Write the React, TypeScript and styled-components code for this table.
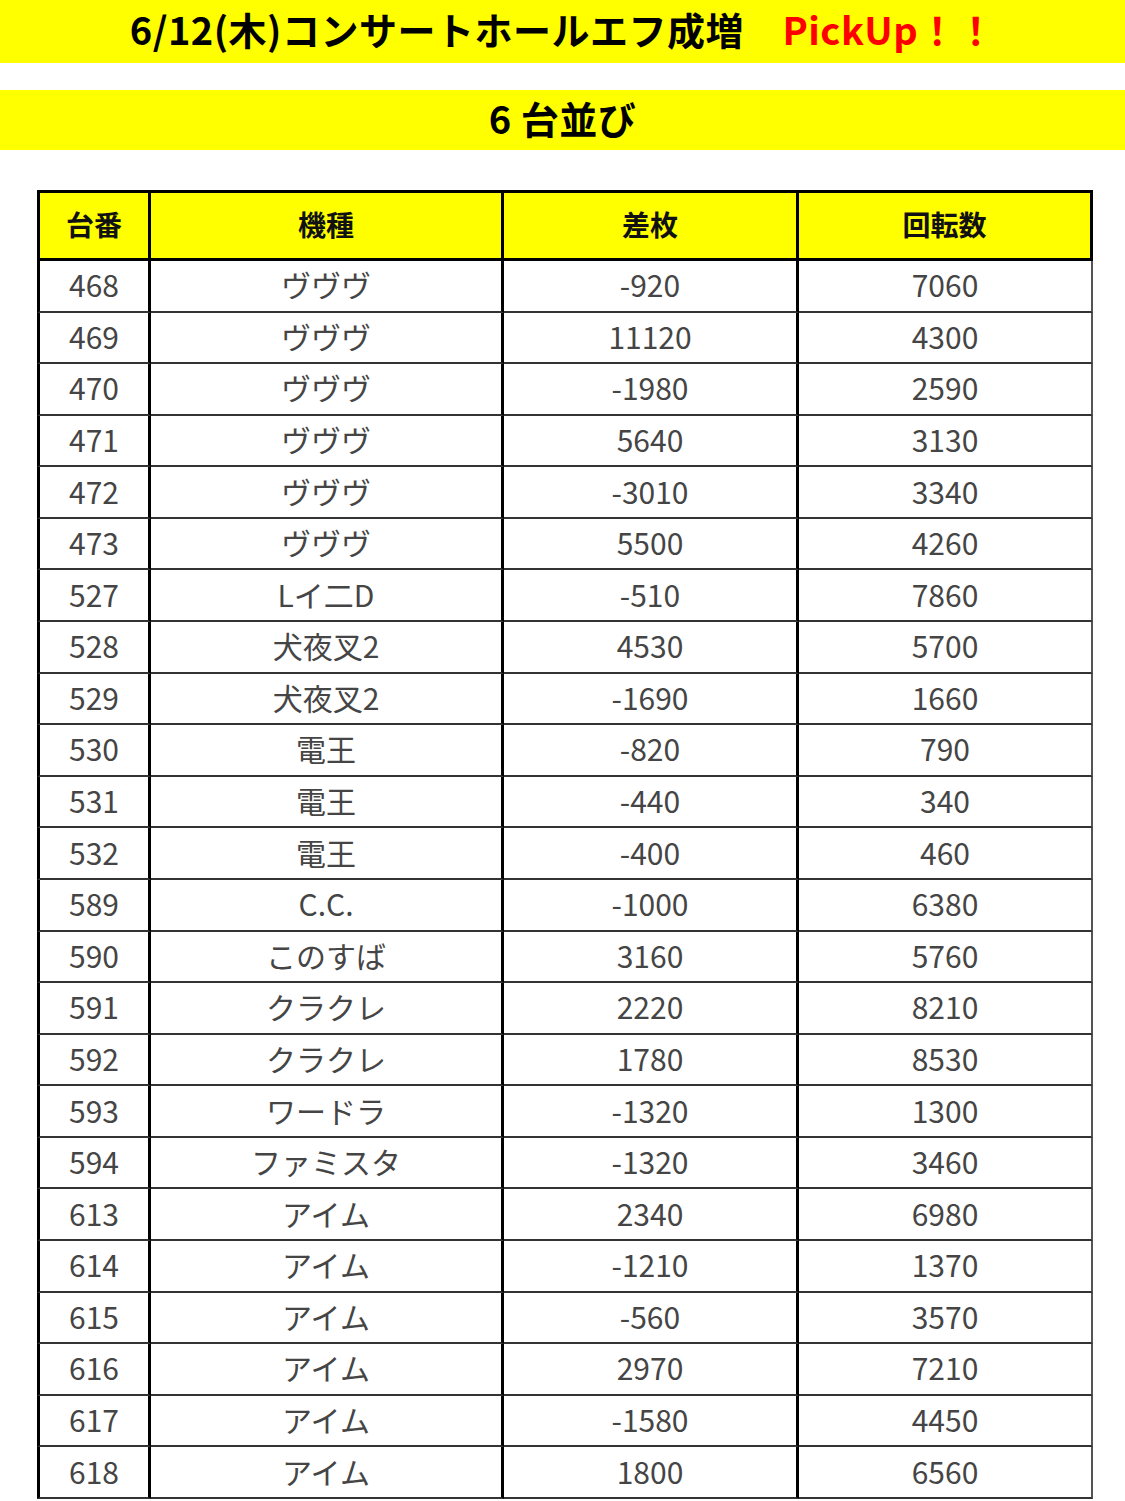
import React from "react";
import styled, { createGlobalStyle } from "styled-components";

const Global = createGlobalStyle`
  html, body { margin: 0; padding: 0; background: #ffffff; }
  body { font-family: "Noto Sans CJK JP", "Noto Sans", sans-serif; }
  * { box-sizing: border-box; }
`;

const Page = styled.div`
  width: 1125px;
  display: flex;
  flex-direction: column;
`;

const Banner = styled.div<{ $h: number; $mt?: number }>`
  height: ${(p) => p.$h}px;
  margin-top: ${(p) => p.$mt ?? 0}px;
  padding-bottom: 5px;
  background: #ffff00;
  display: flex;
  align-items: center;
  justify-content: center;
  font-family: "Noto Sans CJK JP", sans-serif;
  font-weight: 700;
  font-size: 38px;
  letter-spacing: 0.5px;
  color: #000;
  line-height: 1;
  white-space: pre;
`;

const Red = styled.span`
  color: #ff0000;
`;

const Grid = styled.div`
  margin: 40px 0 0 37px;
  width: 1056px;
  display: grid;
  grid-template-columns: 114px 353px 295px 294px;
`;

const HeadCell = styled.div<{ $first?: boolean }>`
  height: 71px;
  background: #ffff00;
  border-top: 3px solid #000;
  border-bottom: 3px solid #000;
  border-right: 3px solid #000;
  border-left: ${(p) => (p.$first ? "3px solid #000" : "0")};
  display: flex;
  align-items: center;
  justify-content: center;
  font-weight: 700;
  font-size: 28px;
  color: #111;
  padding-bottom: 4px;
`;

const Cell = styled.div<{ $first?: boolean; $last?: boolean }>`
  height: 51.58px;
  background: #fff;
  border-bottom: 2px solid #333;
  border-right: ${(p) => (p.$last ? "2px solid #555" : "3px solid #000")};
  border-left: ${(p) => (p.$first ? "3px solid #000" : "0")};
  display: flex;
  align-items: center;
  justify-content: center;
  font-size: 30px;
  color: #454545;
  padding-bottom: 3px;
  white-space: pre;
`;

const rows: [string, string, string, string][] = [
  ["468", "ヴヴヴ", "-920", "7060"],
  ["469", "ヴヴヴ", "11120", "4300"],
  ["470", "ヴヴヴ", "-1980", "2590"],
  ["471", "ヴヴヴ", "5640", "3130"],
  ["472", "ヴヴヴ", "-3010", "3340"],
  ["473", "ヴヴヴ", "5500", "4260"],
  ["527", "Lイ二D", "-510", "7860"],
  ["528", "犬夜叉2", "4530", "5700"],
  ["529", "犬夜叉2", "-1690", "1660"],
  ["530", "電王", "-820", "790"],
  ["531", "電王", "-440", "340"],
  ["532", "電王", "-400", "460"],
  ["589", "C.C.", "-1000", "6380"],
  ["590", "このすば", "3160", "5760"],
  ["591", "クラクレ", "2220", "8210"],
  ["592", "クラクレ", "1780", "8530"],
  ["593", "ワードラ", "-1320", "1300"],
  ["594", "ファミスタ", "-1320", "3460"],
  ["613", "アイム", "2340", "6980"],
  ["614", "アイム", "-1210", "1370"],
  ["615", "アイム", "-560", "3570"],
  ["616", "アイム", "2970", "7210"],
  ["617", "アイム", "-1580", "4450"],
  ["618", "アイム", "1800", "6560"],
];

const headers = ["台番", "機種", "差枚", "回転数"];

export default function App() {
  return (
    <Page>
      <Global />
      <Banner $h={63}>
        6/12(木)コンサートホールエフ成増　<Red>PickUp！！</Red>
      </Banner>
      <Banner $h={60} $mt={27}>
        6 台並び
      </Banner>
      <Grid>
        {headers.map((h, i) => (
          <HeadCell key={h} $first={i === 0}>
            {h}
          </HeadCell>
        ))}
        {rows.map((r) =>
          r.map((v, i) => (
            <Cell key={r[0] + "-" + i} $first={i === 0} $last={i === 3}>
              {v}
            </Cell>
          ))
        )}
      </Grid>
    </Page>
  );
}
